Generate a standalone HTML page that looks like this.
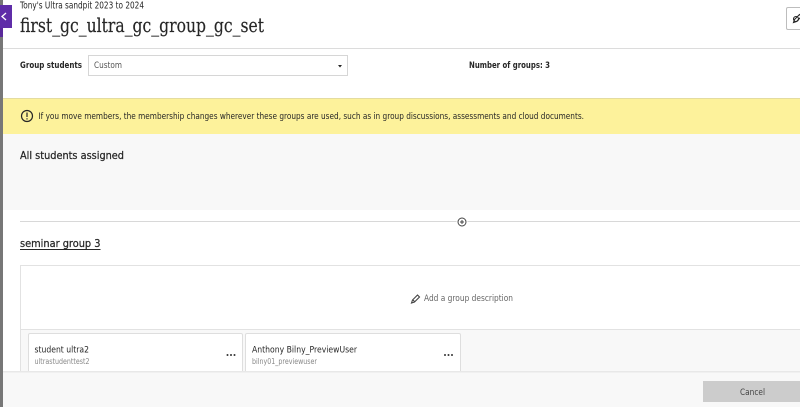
<!DOCTYPE html>
<html><head><meta charset="utf-8"><style>
html,body{margin:0;padding:0;width:800px;height:407px;overflow:hidden;background:#fff}
svg{display:block}
text{font-family:"DejaVu Sans",sans-serif;fill:#262626}
</style></head><body>
<svg width="800" height="407" viewBox="0 0 800 407" xmlns="http://www.w3.org/2000/svg">
<rect width="800" height="407" fill="#fff"/>
<rect x="0" y="0" width="3" height="407" fill="#777"/>
<rect x="0" y="5" width="12" height="23" fill="#5f2da8"/>
<rect x="0" y="28" width="3" height="9" fill="#5a2a9a"/>
<path d="M6 13l-4 3.500 4 3.500" fill="none" stroke="#fff" stroke-width="1.300"/>
<text x="20" y="8.500" font-size="10" textLength="124" lengthAdjust="spacingAndGlyphs">Tony's Ultra sandpit 2023 to 2024</text>
<text x="20" y="32" font-size="19.500" stroke="#262626" stroke-width="0.150" style="font-family:'DejaVu Serif',serif" textLength="244" lengthAdjust="spacingAndGlyphs">first_gc_ultra_gc_group_gc_set</text>
<rect x="786.500" y="7.500" width="20" height="22" rx="1.500" fill="#fff" stroke="#bdbdbd"/>
<circle cx="796" cy="19" r="2.500" fill="none" stroke="#262626" stroke-width="1.100"/>
<path d="M793.500 22.500l1-3 5-5 2 2-5 5z" fill="none" stroke="#262626" stroke-width="1.100"/>
<rect x="3" y="48" width="797" height="1" fill="#dcdcdc"/>
<text x="20" y="68" font-size="9" font-weight="700" textLength="62" lengthAdjust="spacingAndGlyphs">Group students</text>
<rect x="88.500" y="55.500" width="259" height="20" fill="#fff" stroke="#d6d6d6"/>
<text x="94" y="68" font-size="9" style="fill:#555" textLength="28" lengthAdjust="spacingAndGlyphs">Custom</text>
<path d="M338 65h4l-2 2.500z" fill="#262626"/>
<text x="469" y="68" font-size="9" font-weight="700" textLength="81" lengthAdjust="spacingAndGlyphs">Number of groups: 3</text>
<rect x="3" y="98" width="797" height="36" fill="#fdf29b"/>
<rect x="3" y="98" width="797" height="1" fill="#e4dca0"/>
<circle cx="27" cy="116" r="5.500" fill="none" stroke="#262626" stroke-width="1.200"/>
<path d="M27 112.500v4.500M27 118.300v1.200" stroke="#262626" stroke-width="1.200" fill="none"/>
<text x="38.500" y="119" font-size="9" textLength="545.500" lengthAdjust="spacingAndGlyphs">If you move members, the membership changes wherever these groups are used, such as in group discussions, assessments and cloud documents.</text>
<rect x="3" y="134" width="797" height="76" fill="#f8f8f8"/>
<text x="20" y="159" font-size="10.500" stroke="#262626" stroke-width="0.250" textLength="104" lengthAdjust="spacingAndGlyphs">All students assigned</text>
<rect x="20" y="221" width="780" height="1" fill="#d8d8d8"/>
<circle cx="462" cy="222" r="5.500" fill="#fff"/>
<circle cx="462" cy="222" r="4" fill="#fff" stroke="#444" stroke-width="1"/>
<path d="M460 222h4M462 220v4" stroke="#444" stroke-width="1"/>
<text x="20" y="247" font-size="10.500" stroke="#262626" stroke-width="0.250" textLength="80.500" lengthAdjust="spacingAndGlyphs">seminar group 3</text>
<rect x="20" y="249" width="80.500" height="1" fill="#262626"/>
<rect x="20.500" y="265.500" width="790" height="120" fill="#fff" stroke="#e2e2e2"/>
<rect x="21" y="329" width="779" height="1" fill="#e2e2e2"/>
<rect x="21" y="330" width="779" height="45" fill="#f8f8f8"/>
<path d="M411.500 303l1-3 5-5 2 2-5 5zM412.500 299.500l2.500 2.500" fill="none" stroke="#444" stroke-width="1.100"/>
<text x="424" y="301" font-size="9" style="fill:#666" textLength="89" lengthAdjust="spacingAndGlyphs">Add a group description</text>
<rect x="28.500" y="333.500" width="214" height="50" rx="1.500" fill="#fff" stroke="#dedede"/>
<text x="34.500" y="352.500" font-size="9" textLength="54.500" lengthAdjust="spacingAndGlyphs">student ultra2</text>
<text x="34.500" y="364" font-size="7.500" style="fill:#888" textLength="55" lengthAdjust="spacingAndGlyphs">ultrastudenttest2</text>
<g fill="#333"><circle cx="227.500" cy="355" r="1"/><circle cx="231" cy="355" r="1"/><circle cx="234.500" cy="355" r="1"/></g>
<rect x="245.500" y="333.500" width="215" height="50" rx="1.500" fill="#fff" stroke="#dedede"/>
<text x="252" y="352.500" font-size="9" textLength="105" lengthAdjust="spacingAndGlyphs">Anthony Bilny_PreviewUser</text>
<text x="252" y="364" font-size="7.500" style="fill:#888" textLength="65" lengthAdjust="spacingAndGlyphs">bilny01_previewuser</text>
<g fill="#333"><circle cx="445" cy="355" r="1"/><circle cx="448.500" cy="355" r="1"/><circle cx="452" cy="355" r="1"/></g>
<rect x="3" y="372" width="797" height="35" fill="#f8f8f8"/>
<rect x="3" y="371" width="797" height="1.500" fill="#e8e8e8"/>
<rect x="703" y="381" width="97" height="21" fill="#cccccc"/>
<text x="740" y="395" font-size="9" style="fill:#444" textLength="25" lengthAdjust="spacingAndGlyphs">Cancel</text>
</svg>
</body></html>
